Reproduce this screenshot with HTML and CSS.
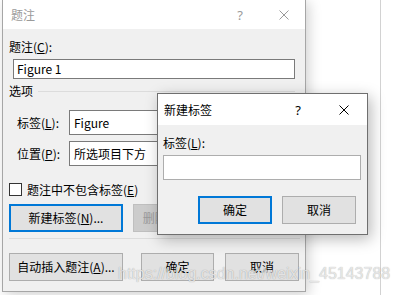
FILE: index.html
```html
<!DOCTYPE html>
<html lang="zh-CN">
<head>
    <meta charset="UTF-8">
    <title>题注</title>
    <link rel="stylesheet" href="styles.css">
</head>
<body>
    <div class="desktop">
        <div class="bg-line"></div>

        <!-- 题注 dialog (inactive) -->
        <div class="dialog main-dialog">
            <div class="titlebar inactive">
                <span class="title">题注</span>
                <span class="help">?</span>
                <svg class="close" width="10" height="10" viewBox="0 0 10 10">
                    <path d="M0.5 0.5 L9.5 9.5 M9.5 0.5 L0.5 9.5" stroke="currentColor" stroke-width="1" fill="none"/>
                </svg>
            </div>
            <div class="body">
                <div class="label caption-label">题注(<u>C</u>):</div>
                <div class="textbox caption-input">Figure 1</div>

                <div class="group-head">
                    <span>选项</span>
                    <span class="group-line"></span>
                </div>

                <div class="field-row first">
                    <span class="field-label">标签(<u>L</u>):</span>
                    <div class="combo">Figure</div>
                </div>
                <div class="field-row">
                    <span class="field-label">位置(<u>P</u>):</span>
                    <div class="combo">所选项目下方</div>
                </div>

                <div class="check-row">
                    <span class="checkbox"></span>
                    <span>题注中不包含标签(<u>E</u>)</span>
                </div>

                <div class="btn-row mid-row">
                    <button class="btn wide focused">新建标签(<u>N</u>)...</button>
                    <button class="btn delete disabled">删除标签(<u>D</u>)</button>
                </div>

                <div class="separator"></div>

                <div class="btn-row bottom-row">
                    <button class="btn wide">自动插入题注(<u>A</u>)...</button>
                    <button class="btn ok">确定</button>
                    <button class="btn cancel">取消</button>
                </div>
            </div>
        </div>

        <!-- 新建标签 dialog (active) -->
        <div class="dialog new-dialog">
            <div class="titlebar">
                <span class="title">新建标签</span>
                <span class="help">?</span>
                <svg class="close" width="10" height="10" viewBox="0 0 10 10">
                    <path d="M0.5 0.5 L9.5 9.5 M9.5 0.5 L0.5 9.5" stroke="currentColor" stroke-width="1" fill="none"/>
                </svg>
            </div>
            <div class="body">
                <div class="label">标签(<u>L</u>):</div>
                <div class="textbox new-input"></div>
                <div class="btn-row new-buttons">
                    <button class="btn small focused">确定</button>
                    <button class="btn small">取消</button>
                </div>
            </div>
        </div>

        <div class="watermark">https://blog.csdn.net/weixin_45143788</div>
    </div>
</body>
</html>
```

FILE: styles.css
```css
* {
    margin: 0;
    padding: 0;
    box-sizing: border-box;
}

body {
    background: #ffffff;
    font-family: "Noto Sans CJK SC", "Noto Sans", sans-serif;
    font-size: 12px;
    color: #000000;
    overflow: hidden;
}

u {
    text-decoration: underline;
    text-underline-offset: 1px;
}

.desktop {
    position: relative;
    width: 398px;
    height: 295px;
    overflow: hidden;
    background: #ffffff;
}

.bg-line {
    position: absolute;
    left: 380px;
    top: 0;
    width: 1px;
    height: 100%;
    background: #d2d2d2;
}

/* dialogs */
.dialog {
    position: absolute;
    display: flex;
    flex-direction: column;
    background: #f0f0f0;
}

.main-dialog {
    left: 2px;
    top: -1px;
    width: 304px;
    height: 293px;
    border: 1px solid #a6a6a6;
    box-shadow: 3px 3px 12px rgba(0, 0, 0, 0.18);
}

.new-dialog {
    left: 157px;
    top: 93px;
    width: 211px;
    height: 142px;
    border: 1px solid #6f6f6f;
    box-shadow: 3px 4px 14px rgba(0, 0, 0, 0.28);
}

.titlebar {
    display: flex;
    align-items: center;
    background: #ffffff;
    color: #000000;
    flex-shrink: 0;
}

.main-dialog .titlebar {
    height: 29px;
    padding-left: 8px;
}

.new-dialog .titlebar {
    height: 31px;
    padding-left: 6px;
}

.titlebar.inactive {
    color: #9a9a9a;
}

.title {
    flex: 1;
    line-height: 16px;
}

.help {
    font-family: "Noto Sans", sans-serif;
    font-size: 13px;
    line-height: 16px;
}

.main-dialog .help {
    margin-right: 36px;
}

.main-dialog .close {
    margin-right: 16px;
}

.new-dialog .help {
    margin-right: 38px;
}

.new-dialog .close {
    margin-right: 18px;
}

.body {
    display: flex;
    flex-direction: column;
    flex: 1;
}

.main-dialog .body {
    padding: 0 6px;
}

.new-dialog .body {
    padding: 0 5px;
}

.label {
    line-height: 16px;
    margin-top: 10px;
}

.textbox {
    background: #ffffff;
    border: 1px solid #7a7a7a;
    line-height: 18px;
    padding-left: 3px;
}

.caption-input {
    margin: 4px 0 0 4px;
    width: 282px;
    height: 20px;
}

.group-head {
    display: flex;
    align-items: center;
    margin-top: 4px;
    line-height: 16px;
}

.group-line {
    flex: 1;
    height: 1px;
    background: #dcdcdc;
    margin: 0 4px 0 5px;
}

.field-row {
    display: flex;
    align-items: center;
    height: 25px;
    margin-top: 6px;
}

.field-row.first {
    margin-top: 11px;
}

.field-label {
    width: 60px;
    padding-left: 8px;
}

.combo {
    width: 226px;
    height: 25px;
    background: #ffffff;
    border: 1px solid #7a7a7a;
    line-height: 23px;
    padding-left: 4px;
}

.check-row {
    display: flex;
    align-items: center;
    gap: 5px;
    height: 16px;
    margin-top: 15px;
}

.checkbox {
    width: 13px;
    height: 13px;
    background: #ffffff;
    border: 1px solid #333333;
}

.btn-row {
    display: flex;
    height: 28px;
}

.btn {
    height: 28px;
    background: #e1e1e1;
    border: 1px solid #adadad;
    font-family: inherit;
    font-size: 12px;
    color: #000000;
    line-height: 16px;
    white-space: nowrap;
}

.btn.focused {
    border: 2px solid #0078d7;
}

.btn.disabled {
    background: #cccccc;
    border-color: #bfbfbf;
    color: #9a9a9a;
}

.btn.wide {
    width: 114px;
}

.btn.delete {
    width: 84px;
    margin-left: 10px;
}

.mid-row {
    margin-top: 7px;
}

.separator {
    width: 291px;
    height: 1px;
    background: #dcdcdc;
    margin-top: 6px;
}

.bottom-row {
    margin-top: 14px;
}

.btn.ok {
    width: 73px;
    margin-left: 18px;
}

.btn.cancel {
    width: 74px;
    margin-left: 11px;
}

.new-input {
    margin-top: 4px;
    width: 198px;
    height: 25px;
    border-color: #adadad;
}

.new-buttons {
    justify-content: flex-end;
    gap: 10px;
    margin-top: 16px;
    padding-right: 6px;
}

.btn.small {
    width: 74px;
}

.watermark {
    position: absolute;
    left: 118px;
    top: 265px;
    font-family: "Liberation Sans", Arial, sans-serif;
    font-size: 16px;
    color: rgba(240, 240, 240, 0.85);
    text-shadow: 0 0 1px rgba(0, 0, 0, 0.35);
    white-space: nowrap;
    pointer-events: none;
}
```
